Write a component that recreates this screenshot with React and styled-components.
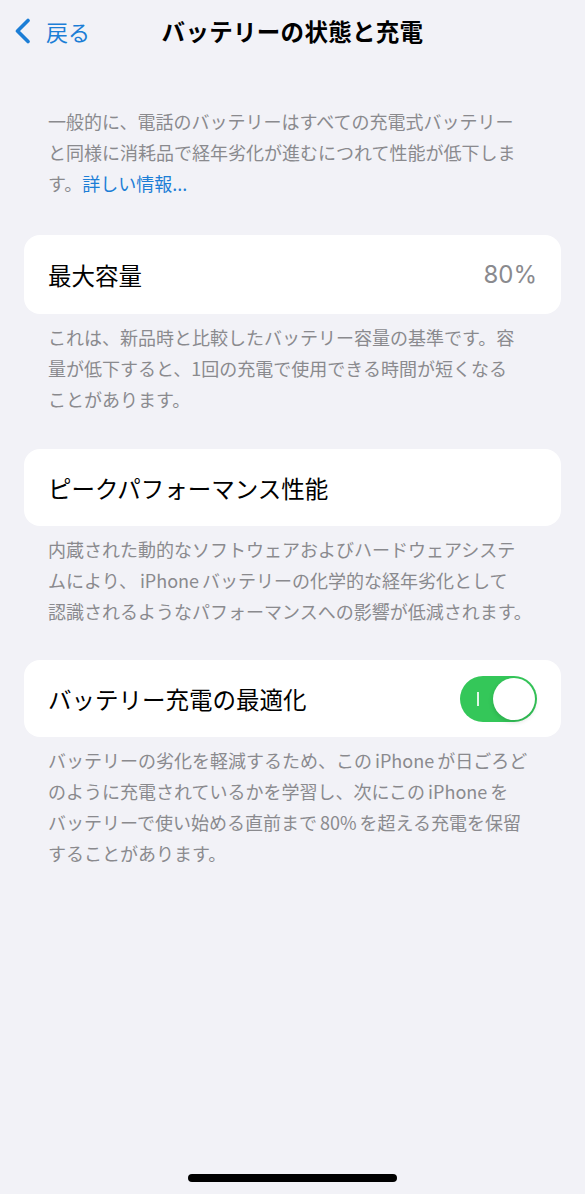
import React from "react";
import styled, { createGlobalStyle } from "styled-components";

const GlobalStyle = createGlobalStyle`
	html, body {
		margin: 0;
		padding: 0;
		background: #f2f2f7;
	}
	body {
		font-family: "Noto Sans CJK JP", "Noto Sans", sans-serif;
		-webkit-font-smoothing: antialiased;
	}
`;

const Screen = styled.div`
	width: 585px;
	height: 1194px;
	background: #f2f2f7;
	display: flex;
	flex-direction: column;
	overflow: hidden;
`;

const NavBar = styled.div`
	height: 62px;
	display: grid;
	grid-template-columns: 1fr auto 1fr;
	align-items: center;
	padding: 0 12px;
`;

const BackButton = styled.div`
	display: flex;
	align-items: center;
	gap: 14px;
	color: #1c7ed6;
	font-size: 22px;
	padding-left: 2px;
`;

const Title = styled.div`
	font-size: 23.5px;
	font-weight: 700;
	color: #000;
	letter-spacing: 0.3px;
`;

const Content = styled.div`
	flex: 1;
	display: flex;
	flex-direction: column;
	padding: 44px 24px 0;
`;

const Note = styled.p`
	margin: 0;
	padding: 0 24px;
	font-size: 18px;
	line-height: 31px;
	color: #8a8a8e;
	white-space: nowrap;
	margin-bottom: ${(p) => p.$after || 0}px;
`;

const Latin = styled.span`
	margin: 0 3px;
`;

const Link = styled.span`
	color: #1c7ed6;
`;

const Card = styled.div`
	background: #fff;
	border-radius: 16px;
	height: ${(p) => p.$h}px;
	padding: 0 24px;
	display: flex;
	align-items: center;
	justify-content: space-between;
	margin-bottom: 8px;
`;

const Label = styled.span`
	font-size: 23.5px;
	color: #000;
`;

const Value = styled.span`
	font-family: "Inter", "Noto Sans", sans-serif;
	font-size: 24px;
	color: #8a8a8e;
`;

const Switch = styled.div`
	width: 77px;
	height: 46px;
	border-radius: 23px;
	background: #34c759;
	display: flex;
	align-items: center;
	justify-content: space-between;
	padding: 0 2px 0 17px;
	box-sizing: border-box;
`;

const OnMark = styled.span`
	width: 1.5px;
	height: 14px;
	background: rgba(255, 255, 255, 0.85);
`;

const Knob = styled.span`
	width: 42px;
	height: 42px;
	border-radius: 50%;
	background: #fff;
	box-shadow: 0 2px 5px rgba(0, 0, 0, 0.15);
`;

const HomeBar = styled.div`
	display: flex;
	justify-content: center;
	padding-bottom: 12px;
	span {
		width: 209px;
		height: 8px;
		border-radius: 4px;
		background: #000;
	}
`;

const Chevron = () => (
	<svg width="18" height="26" viewBox="0 0 18 26">
		<path
			d="M14 2.5 L3.5 13 L14 23.5"
			fill="none"
			stroke="#1c7ed6"
			strokeWidth="3.6"
			strokeLinecap="round"
			strokeLinejoin="round"
		/>
	</svg>
);

export default function App() {
	return (
		<Screen>
			<GlobalStyle />
			<NavBar>
				<BackButton>
					<Chevron />
					<span>戻る</span>
				</BackButton>
				<Title>バッテリーの状態と充電</Title>
				<div />
			</NavBar>
			<Content>
				<Note $after={36}>
					一般的に、電話のバッテリーはすべての充電式バッテリー
					<br />
					と同様に消耗品で経年劣化が進むにつれて性能が低下しま
					<br />
					す。<Link>詳しい情報...</Link>
				</Note>
				<Card $h={79}>
					<Label>最大容量</Label>
					<Value>80%</Value>
				</Card>
				<Note $after={34}>
					これは、新品時と比較したバッテリー容量の基準です。容
					<br />
					量が低下すると、1回の充電で使用できる時間が短くなる
					<br />
					ことがあります。
				</Note>
				<Card $h={77}>
					<Label>ピークパフォーマンス性能</Label>
				</Card>
				<Note $after={33}>
					内蔵された動的なソフトウェアおよびハードウェアシステ
					<br />
					ムにより、<Latin>iPhone</Latin>バッテリーの化学的な経年劣化として
					<br />
					認識されるようなパフォーマンスへの影響が低減されます。
				</Note>
				<Card $h={77}>
					<Label>バッテリー充電の最適化</Label>
					<Switch>
						<OnMark />
						<Knob />
					</Switch>
				</Card>
				<Note>
					バッテリーの劣化を軽減するため、この<Latin>iPhone</Latin>が日ごろど
					<br />
					のように充電されているかを学習し、次にこの<Latin>iPhone</Latin>を
					<br />
					バッテリーで使い始める直前まで<Latin>80%</Latin>を超える充電を保留
					<br />
					することがあります。
				</Note>
			</Content>
			<HomeBar>
				<span />
			</HomeBar>
		</Screen>
	);
}
